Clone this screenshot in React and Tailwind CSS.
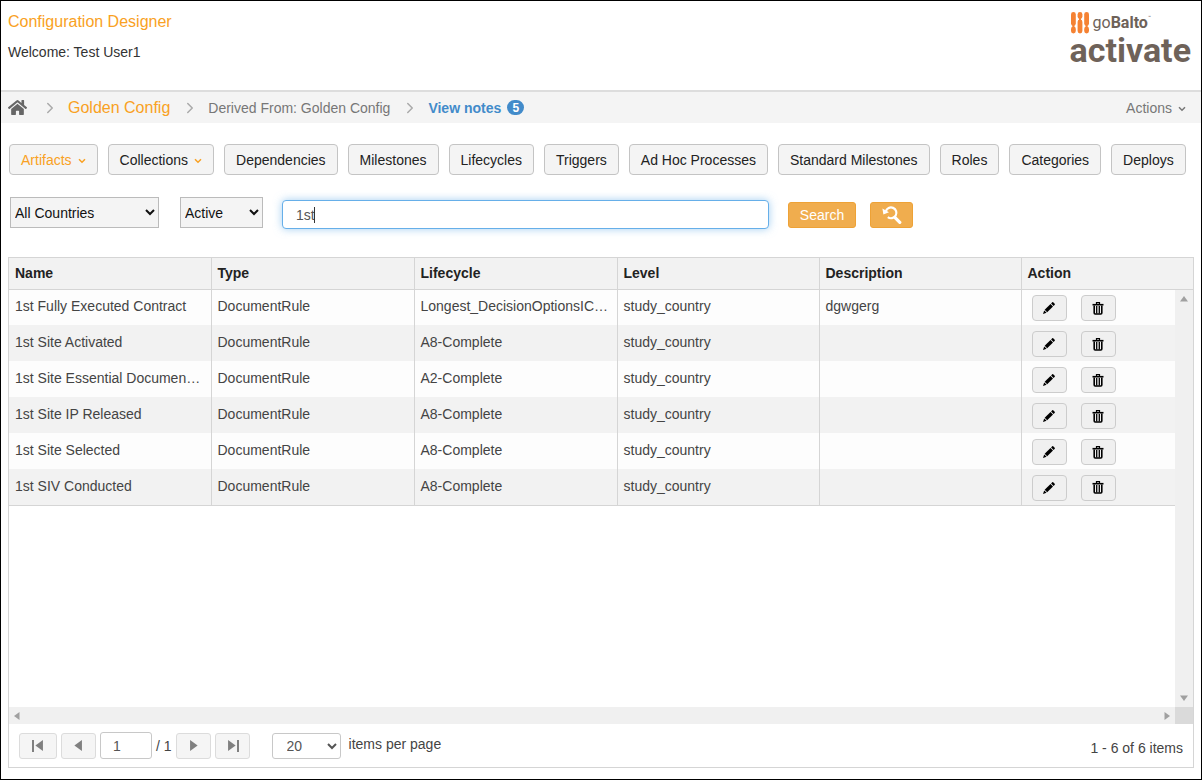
import { ChevronRight } from "lucide-react"
import { FaHome } from "react-icons/fa"

const tabs = [
    { name: "Artifacts", menu: true, active: true },
    { name: "Collections", menu: true },
    { name: "Dependencies" },
    { name: "Milestones" },
    { name: "Lifecycles" },
    { name: "Triggers" },
    { name: "Ad Hoc Processes" },
    { name: "Standard Milestones" },
    { name: "Roles" },
    { name: "Categories" },
    { name: "Deploys" },
]

const rows = [
    { name: "1st Fully Executed Contract", lifecycle: "Longest_DecisionOptionsIC…", description: "dgwgerg" },
    { name: "1st Site Activated", lifecycle: "A8-Complete" },
    { name: "1st Site Essential Documen…", lifecycle: "A2-Complete" },
    { name: "1st Site IP Released", lifecycle: "A8-Complete" },
    { name: "1st Site Selected", lifecycle: "A8-Complete" },
    { name: "1st SIV Conducted", lifecycle: "A8-Complete" },
]

function PencilIcon() {
    return (
        <svg viewBox="0 0 12 12" className="size-3" fill="currentColor">
            <path d="M9.200.3q.5-.4 1 0l1.500 1.500q.4.5 0 1l-1.100 1.100L8.100 1.400z" />
            <path d="M7.500 2L10 4.500 4.200 10.300 1.700 7.800z" />
            <path d="M1.200 8.400l2.400 2.400L0 12z" />
        </svg>
    )
}

function TrashIcon() {
    return (
        <svg viewBox="0 0 12 13" className="h-[13px] w-3" fill="none" stroke="currentColor">
            <path d="M4.5 2V.7h3V2" strokeWidth="1.2" />
            <path d="M.5 2.7h11" strokeWidth="1.6" />
            <path d="M2.200 3.5v7.600q0 .9.9.9h5.800q.9 0 .9-.9V3.5" strokeWidth="1.6" />
            <path d="M4.700 4v7.500M7.300 4v7.500" strokeWidth="1.300" />
        </svg>
    )
}

function ResetSearchIcon() {
    return (
        <svg viewBox="0 0 20 20" className="size-5" fill="none" stroke="currentColor">
            <path d="M3.800 6.400A5.400 5.400 0 1 1 5.800 12.200" strokeWidth="2.200" />
            <path d="M.4 3.400l1 6.200L7 7.200z" fill="currentColor" stroke="none" />
            <path d="M12.800 12.400l5 5" strokeWidth="3.200" strokeLinecap="round" />
        </svg>
    )
}

function SmallChevron({ className = "" }) {
    return (
        <svg viewBox="0 0 8 6" className={"mt-0.5 h-[6px] w-2 " + className} fill="none" stroke="currentColor">
            <path d="M1 1.200l3 3 3-3" strokeWidth="1.5" />
        </svg>
    )
}

// one arrow, turned to face each way
function Arrow({ className = "", size = 8 }) {
    return (
        <svg viewBox="0 0 8 8" width={size} height={size} className={className} fill="currentColor">
            <path d="M6.5 0v8L1 4z" />
        </svg>
    )
}

function Logo() {
    return (
        <div className="flex flex-col text-[#6e6259] font-[Roboto,sans-serif]">
            <div className="flex h-6 items-center gap-1 pl-px">
                <svg viewBox="0 0 18 22" className="h-[22px] w-[18px]" fill="#f58233">
                    <rect x="0" y="0" width="4.800" height="14" rx="2.400" />
                    <rect x="1.400" y="12" width="2" height="5" />
                    <rect x="0" y="14.500" width="4.800" height="7" rx="2.400" />
                    <rect x="6.600" y="0" width="4.800" height="7" rx="2.400" />
                    <rect x="8" y="5" width="2" height="5" />
                    <rect x="6.600" y="7.500" width="4.800" height="14" rx="2.400" />
                    <rect x="13.200" y="0" width="4.800" height="14" rx="2.400" />
                    <rect x="14.600" y="12" width="2" height="5" />
                    <rect x="13.200" y="14.500" width="4.800" height="7" rx="2.400" />
                </svg>
                <span className="text-base leading-6">
                    go<b>Balto</b>
                </span>
                <span className="-ml-1 self-start text-[5px] leading-[12px]">™</span>
            </div>
            <b className="text-[34px] leading-[30px]">activate</b>
        </div>
    )
}

function Pager() {
    const btn = "flex h-[26px] w-[35px] items-center justify-center rounded-[3px] border border-[#dcdcdc] bg-[#f5f5f5] text-[#808080]"
    return (
        <div className="flex h-[43px] items-center bg-white px-[10px] text-sm text-[#444]">
            <button aria-label="First page" className={btn + " mr-1 w-[38px]"}>
                <span className="h-3 w-0.5 bg-[#808080]" />
                <Arrow size={11} />
            </button>
            <button aria-label="Previous page" className={btn}>
                <Arrow size={11} />
            </button>
            <input
                aria-label="Page"
                defaultValue="1"
                className="ml-1 h-[27px] w-[52px] rounded-[3px] border border-[#c8c8c8] bg-white pl-3 text-sm text-[#555]"
            />
            <span className="mx-1">/ 1</span>
            <button aria-label="Next page" className={btn}>
                <Arrow size={11} className="rotate-180" />
            </button>
            <button aria-label="Last page" className={btn + " ml-1"}>
                <Arrow size={11} className="rotate-180" />
                <span className="h-3 w-0.5 bg-[#808080]" />
            </button>
            <select
                id="pageSize"
                className="ml-[22px] h-[26px] w-[69px] rounded-[3px] border border-[#c8c8c8] bg-white pl-[10px] text-sm text-[#555]"
            >
                <option>20</option>
            </select>
            <label htmlFor="pageSize" className="ml-2 pb-1">items per page</label>
            <span className="ml-auto pt-1">1 - 6 of 6 items</span>
        </div>
    )
}

function Grid() {
    const action = "flex h-[26px] w-[35px] items-center justify-center rounded border border-[#ccc] bg-[#f0f0f0] text-black"
    return (
        <div className="mx-[7px] flex grow flex-col border border-[#d5d5d5]">
            <div className="flex grow">
                <div className="min-w-0 grow">
                    <table className="w-full table-fixed border-collapse text-left text-sm text-[#444]">
                        <colgroup>
                            <col className="w-[202px]" />
                            <col className="w-[203px]" />
                            <col className="w-[203px]" />
                            <col className="w-[202px]" />
                            <col className="w-[202px]" />
                            <col className="w-[154px]" />
                        </colgroup>
                        <thead>
                            <tr className="h-[31px] border-b border-[#d5d5d5] bg-[#f2f2f2] text-[#222]">
                                {["Name", "Type", "Lifecycle", "Level", "Description", "Action"].map((head) => (
                                    <th key={head} className="border-r border-[#d5d5d5] px-[6px] font-bold">{head}</th>
                                ))}
                            </tr>
                        </thead>
                        <tbody className="border-b border-[#d5d5d5]">
                            {rows.map((row) => (
                                <tr key={row.name} className="h-9 bg-[#fdfdfd] even:bg-[#f2f2f2]">
                                    {[row.name, "DocumentRule", row.lifecycle, "study_country", row.description].map((cell, i) => (
                                        <td key={i} className="truncate border-r border-[#d5d5d5] px-[6px] pb-0.5">{cell}</td>
                                    ))}
                                    <td className="pl-[10px] pt-0.5">
                                        <div className="flex gap-[14px]">
                                            <button aria-label="Edit" className={action}>
                                                <PencilIcon />
                                            </button>
                                            <button aria-label="Delete" className={action}>
                                                <TrashIcon />
                                            </button>
                                        </div>
                                    </td>
                                </tr>
                            ))}
                        </tbody>
                    </table>
                </div>
                <div className="flex w-[18px] shrink-0 flex-col bg-[#f0f0f0] text-[#a0a0a0]">
                    <div className="h-8 border-b border-[#d5d5d5] bg-[#f2f2f2]" />
                    <div className="flex grow flex-col items-center justify-between py-[5px]">
                        <Arrow className="rotate-90" />
                        <Arrow className="-rotate-90" />
                    </div>
                </div>
            </div>
            <div className="flex h-[17px] text-[#a0a0a0]">
                <div className="flex grow items-center justify-between bg-[#f0f0f0] px-1">
                    <Arrow />
                    <Arrow className="rotate-180" />
                </div>
                <div className="w-[18px] bg-[#dadada]" />
            </div>
            <Pager />
        </div>
    )
}

function App() {
    return (
        <div className="flex min-h-screen flex-col border border-black bg-white pb-[11px] font-['Liberation_Sans',Arial,sans-serif] text-sm text-[#333]">
            <header className="flex h-[89px] items-start justify-between pl-[7px] pr-[10px] pt-[10px]">
                <div>
                    <h1 className="text-base leading-[22px] text-[#f9a123]">Configuration Designer</h1>
                    <p className="mt-2 leading-[22px]">Welcome: Test User1</p>
                </div>
                <Logo />
            </header>

            <nav className="flex h-[33px] items-center border-t-2 border-[#ddd] bg-[#f4f4f4] pl-[7px] pr-[15px] text-[#777]">
                <a href="#home" aria-label="Home">
                    <FaHome size={19} className="text-[#666]" />
                </a>
                <ChevronRight size={18} className="ml-[14px] mr-[9px] text-[#aaa]" />
                <a href="#config" className="text-base text-[#f9a123]">Golden Config</a>
                <ChevronRight size={18} className="ml-[11px] mr-[9px] text-[#aaa]" />
                <span>Derived From: Golden Config</span>
                <ChevronRight size={18} className="ml-[11px] mr-[9px] text-[#aaa]" />
                <a href="#notes" className="flex items-center gap-[6px] font-bold text-[#428bca]">
                    View notes
                    <span className="flex h-[15px] w-[17px] items-center justify-center rounded-full bg-[#428bca] text-xs text-white">5</span>
                </a>
                <button className="ml-auto flex items-center gap-[6px]">
                    Actions
                    <SmallChevron />
                </button>
            </nav>

            <div className="mt-[21px] flex flex-wrap gap-[10px] px-2">
                {tabs.map((tab) => (
                    <button
                        key={tab.name}
                        className={
                            "flex h-[31px] items-center gap-[6px] rounded border border-[#c4c4c4] bg-[#f4f4f4] px-[11px] " +
                            (tab.active ? "text-[#f9a123]" : "text-[#222]")
                        }
                    >
                        {tab.name}
                        {tab.menu && <SmallChevron className="text-[#f9a123]" />}
                    </button>
                ))}
            </div>

            <div className="mb-7 mt-[21px] flex items-center px-[9px]">
                <select aria-label="Country" className="h-[31px] w-[149px] border border-[#bbb] bg-[#f4f4f4] text-sm text-[#111]">
                    <option>All Countries</option>
                </select>
                <select aria-label="Status" className="ml-[21px] h-[31px] w-[83px] border border-[#bbb] bg-[#f4f4f4] text-sm text-[#111]">
                    <option>Active</option>
                </select>
                <div className="relative ml-[19px] mt-1 w-[487px]">
                    <input
                        aria-label="Search term"
                        defaultValue="1st"
                        className="block h-[29px] w-full rounded border border-[#66afe9] bg-white px-[13px] text-sm text-[#555] caret-transparent shadow-[0_0_8px_rgba(102,175,233,0.6)] outline-none"
                    />
                    {/* text cursor */}
                    <span className="absolute left-8 top-[7px] h-4 w-px bg-[#333]" />
                </div>
                <button className="ml-[19px] mt-1 h-[26px] w-[68px] rounded-[3px] border border-[#eea236] bg-[#f0ad4e] text-white">
                    Search
                </button>
                <button
                    aria-label="Reset search"
                    className="ml-[14px] mt-1 flex h-[26px] w-[43px] items-center justify-center rounded-[3px] border border-[#eea236] bg-[#f0ad4e] text-white"
                >
                    <ResetSearchIcon />
                </button>
            </div>

            <Grid />
        </div>
    )
}

export default App
